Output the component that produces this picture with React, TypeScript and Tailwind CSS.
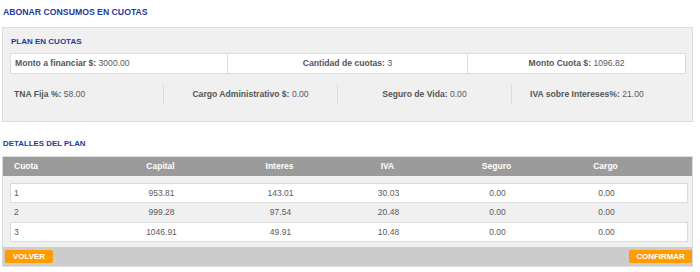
import React from "react";

const rows = [
  ["1", "953.81", "143.01", "30.03", "0.00", "0.00"],
  ["2", "999.28", "97.54", "20.48", "0.00", "0.00"],
  ["3", "1046.91", "49.91", "10.48", "0.00", "0.00"],
];

const cols = "grid grid-cols-[97px_110px_128px_88px_130px_88px_1fr]";

function Label({ l, v }: { l: string; v: string }) {
  return (
    <span className="whitespace-nowrap">
      <span className="font-bold text-[#555]">{l}</span>{" "}
      <span className="text-[#5a5a5a]">{v}</span>
    </span>
  );
}

export default function App() {
  return (
    <div
      className="w-[700px] h-[272px] bg-white text-[8.6px] text-[#555] overflow-hidden"
      style={{ fontFamily: '"Liberation Sans", Arial, sans-serif' }}
    >
      <div className="h-[27px] pl-[3px] pt-[7px] font-bold text-[8.7px] text-[#1f3a9c] leading-[11px]">
        ABONAR CONSUMOS EN CUOTAS
      </div>
      <div className="ml-[2px] w-[691px] h-[95px] border border-[#dcdcdc] bg-[#f0f0f0]">
        <div className="h-[25px] pl-[8px] pt-[9px] font-bold text-[8px] text-[#1f3a9c] leading-[10px]">
          PLAN EN CUOTAS
        </div>
        <div className="ml-[7px] w-[676px] h-[21px] grid grid-cols-[218px_240px_218px]">
          <div className="bg-white border border-[#dcdcdc] flex items-center pl-[4px]">
            <Label l="Monto a financiar $:" v="3000.00" />
          </div>
          <div className="bg-white border border-l-0 border-[#dcdcdc] flex items-center justify-center">
            <Label l="Cantidad de cuotas:" v="3" />
          </div>
          <div className="bg-white border border-l-0 border-[#dcdcdc] flex items-center justify-center">
            <Label l="Monto Cuota $:" v="1096.82" />
          </div>
        </div>
        <div className="ml-[7px] mt-[10px] w-[676px] h-[20px] grid grid-cols-[153px_174px_174px_175px]">
          <div className="flex items-center pl-[4px]">
            <Label l="TNA Fija %:" v="58.00" />
          </div>
          <div className="flex items-center justify-center border-l border-[#dcdcdc]">
            <Label l="Cargo Administrativo $:" v="0.00" />
          </div>
          <div className="flex items-center justify-center border-l border-[#dcdcdc]">
            <Label l="Seguro de Vida:" v="0.00" />
          </div>
          <div className="flex items-center pl-[18px] border-l border-[#dcdcdc]">
            <Label l="IVA sobre Intereses%:" v="21.00" />
          </div>
        </div>
      </div>
      <div className="h-[34px] pl-[3px] pt-[17px] font-bold text-[7.9px] text-[#1f3a9c] leading-[10px]">
        DETALLES DEL PLAN
      </div>
      <div className="ml-[2px] w-[691px] h-[111px] border border-[#dcdcdc] bg-[#f0f0f0] flex flex-col text-[8.5px]">
        <div className="h-[19px] bg-[#9b9b9b] pl-[7px] flex items-center">
          <div className={`${cols} w-[678px] text-white font-bold`}>
            <div className="pl-[4px]">Cuota</div>
            <div className="text-center -ml-[3px]">Capital</div>
            <div className="text-center -ml-[3px]">Interes</div>
            <div className="text-center -ml-[3px]">IVA</div>
            <div className="text-center -ml-[3px]">Seguro</div>
            <div className="text-center -ml-[3px]">Cargo</div>
            <div />
          </div>
        </div>
        <div className="pt-[7px] pl-[7px]">
          {rows.map((r, i) => (
            <div
              key={i}
              className={`${cols} w-[678px] items-center text-[#5a5a5a] ${
                i % 2 === 0
                  ? "h-[20px] bg-white border border-[#dcdcdc]"
                  : "h-[19px] border-x border-transparent"
              }`}
            >
              <div className="pl-[3px]">{r[0]}</div>
              <div className="text-center -ml-[3px]">{r[1]}</div>
              <div className="text-center -ml-[3px]">{r[2]}</div>
              <div className="text-center -ml-[3px]">{r[3]}</div>
              <div className="text-center -ml-[3px]">{r[4]}</div>
              <div className="text-center -ml-[3px]">{r[5]}</div>
              <div />
            </div>
          ))}
        </div>
        <div className="mt-auto h-[19px] bg-[#cccccc] flex items-center justify-between pl-[2px]">
          <button className="h-[13px] w-[48px] rounded-[2px] bg-[#ff9c00] text-white font-bold text-[7.9px] leading-[13px]">
            VOLVER
          </button>
          <button className="h-[13px] w-[63px] rounded-[2px] bg-[#ff9c00] text-white font-bold text-[7.9px] leading-[13px]">
            CONFIRMAR
          </button>
        </div>
      </div>
    </div>
  );
}
